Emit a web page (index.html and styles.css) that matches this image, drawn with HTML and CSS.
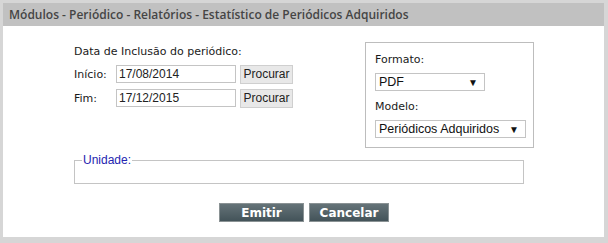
FILE: index.html
```html
<!DOCTYPE html>
<html>
	<head>
		<meta charset="UTF-8">
		<title>Estatístico de Periódicos Adquiridos</title>
		<link rel="stylesheet" href="styles.css">
	</head>
	<body>
		<div class="janela">
			<div class="titulo">Módulos - Periódico - Relatórios - Estatístico de Periódicos Adquiridos</div>
			<div class="conteudo">
				<div class="linha">
					<div class="datas">
						<div class="rotulo">Data de Inclusão do periódico:</div>
						<div class="campo">
							<label>Início:</label>
							<input type="text" class="txt" value="17/08/2014" />
							<input type="button" class="procurar" value="Procurar" />
						</div>
						<div class="campo">
							<label>Fim:</label>
							<input type="text" class="txt" value="17/12/2015" />
							<input type="button" class="procurar" value="Procurar" />
						</div>
					</div>
					<div class="opcoes">
						<div class="rotulo">Formato:</div>
						<div class="sel sel-pdf"><span>PDF</span><span class="seta">&#9660;</span></div>
						<div class="rotulo">Modelo:</div>
						<div class="sel sel-modelo"><span>Periódicos Adquiridos</span><span class="seta">&#9660;</span></div>
					</div>
				</div>
				<fieldset class="unidade">
					<legend>Unidade:</legend>
				</fieldset>
				<div class="acoes">
					<input type="button" class="bt" value="Emitir" />
					<input type="button" class="bt bt-cancelar" value="Cancelar" />
				</div>
			</div>
		</div>
	</body>
</html>
```

FILE: styles.css
```css
* {
	margin: 0;
	padding: 0;
	box-sizing: border-box;
}

body {
	background-color: #d6d6d6;
	width: 608px;
	height: 243px;
	padding: 3px 4px 6px 3px;
}

.janela {
	background-color: #fff;
	height: 234px;
}

.titulo {
	height: 23px;
	line-height: 23px;
	background-color: #c1c1c1;
	padding-left: 6px;
	font-family: "Open Sans", sans-serif;
	font-weight: 600;
	font-size: 12px;
	color: #454545;
}

.conteudo {
	padding: 16px 0 0 71px;
}

.linha {
	display: flex;
}

.datas {
	width: 291px;
	padding-top: 3px;
	font-family: "DejaVu Sans", Verdana, sans-serif;
	font-size: 11px;
	color: #1a1a1a;
}

.rotulo {
	font-family: "DejaVu Sans", Verdana, sans-serif;
	font-size: 11px;
	color: #1a1a1a;
	height: 17px;
}

.campo {
	display: flex;
	align-items: center;
	height: 24px;
}

.campo label {
	width: 42px;
}

.txt {
	width: 120px;
	height: 18px;
	border: 1px solid #c4c4c4;
	font-family: "Liberation Sans", Arial, sans-serif;
	font-size: 12px;
	color: #222;
	padding-left: 2px;
	outline: none;
}

.procurar {
	width: 53px;
	height: 19px;
	margin-left: 4px;
	background-color: #e8e8e8;
	border: 1px solid #cfcfcf;
	font-family: "Liberation Sans", Arial, sans-serif;
	font-size: 12px;
	color: #222;
}

.opcoes {
	width: 169px;
	height: 106px;
	border: 1px solid #bdbdbd;
	padding: 10px 0 0 9px;
}

.opcoes .rotulo {
	height: 20px;
}

.sel {
	display: flex;
	justify-content: space-between;
	align-items: center;
	height: 18px;
	border: 1px solid #c4c4c4;
	padding: 0 6px 0 3px;
	font-family: "Liberation Sans", Arial, sans-serif;
	font-size: 12.5px;
	color: #111;
	margin-bottom: 9px;
}

.sel-pdf {
	width: 110px;
}

.sel-modelo {
	width: 151px;
}

.seta {
	font-size: 10px;
}

.unidade {
	width: 450px;
	height: 31px;
	margin-top: 5px;
	border: 1px solid #c4c4c4;
	padding: 0 7px;
}

.unidade legend {
	font-family: "Liberation Sans", Arial, sans-serif;
	font-size: 12px;
	color: #2424b0;
	padding: 0 1px;
}

.acoes {
	display: flex;
	gap: 5px;
	margin: 19px 0 0 145px;
}

.bt {
	width: 85px;
	height: 19px;
	background: linear-gradient(#657378, #435359);
	border: 1px solid #8a9294;
	font-family: "DejaVu Sans", Verdana, sans-serif;
	font-weight: bold;
	font-size: 12px;
	color: #fff;
}

.bt-cancelar {
	width: 80px;
}
```
